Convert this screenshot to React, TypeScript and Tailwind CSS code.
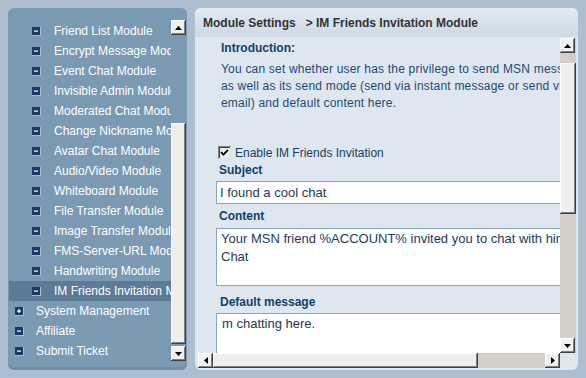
import React from "react"

const subModules = [
  "Friend List Module",
  "Encrypt Message Module",
  "Event Chat Module",
  "Invisible Admin Module",
  "Moderated Chat Module",
  "Change Nickname Module",
  "Avatar Chat Module",
  "Audio/Video Module",
  "Whiteboard Module",
  "File Transfer Module",
  "Image Transfer Module",
  "FMS-Server-URL Module",
  "Handwriting Module",
  "IM Friends Invitation Module",
]

const topLevel = [
  { name: "System Management", plus: true },
  { name: "Affiliate", plus: false },
  { name: "Submit Ticket", plus: false },
]

const bevel =
  "shadow-[inset_-1px_-1px_0_#404040,inset_1px_1px_0_#ffffff,inset_-2px_-2px_0_#808080]"

function TreeIcon({ plus }: { plus?: boolean }) {
  return (
    <svg width="9" height="9" viewBox="0 0 9 9" className="shrink-0">
      <rect x="0" y="0" width="9" height="9" fill="#a9bdd0" />
      <rect x="0" y="0" width="8" height="8" fill="#1a3a63" />
      <rect x="2" y="3.5" width="4" height="1.2" fill="#ffffff" />
      {plus && <rect x="3.4" y="2" width="1.2" height="4" fill="#ffffff" />}
    </svg>
  )
}

function Arrow({ dir }: { dir: "up" | "down" | "left" | "right" }) {
  const pts = {
    up: "0,4 7,4 3.5,0",
    down: "0,0 7,0 3.5,4",
    left: "4,0 4,7 0,3.5",
    right: "0,0 0,7 4,3.5",
  }[dir]
  const vertical = dir === "up" || dir === "down"
  return (
    <div
      className={`w-[15px] h-[15px] shrink-0 bg-[#f0f0f0] flex items-center justify-center ${bevel}`}
    >
      <svg
        width={vertical ? 7 : 4}
        height={vertical ? 4 : 7}
        viewBox={vertical ? "0 0 7 4" : "0 0 4 7"}
      >
        <polygon points={pts} fill="#000000" />
      </svg>
    </div>
  )
}

function Checkbox() {
  return (
    <span className="w-[13px] h-[13px] shrink-0 bg-[#ececec] border border-t-[#808080] border-l-[#808080] border-b-[#e0e0e0] border-r-[#e0e0e0] shadow-[inset_1px_1px_0_#404040] flex items-center justify-center">
      <svg width="9" height="9" viewBox="0 0 9 9">
        <path d="M1 4.2 L3.4 6.6 L8 1.8" stroke="#000" strokeWidth="1.8" fill="none" />
      </svg>
    </span>
  )
}

export default function App() {
  return (
    <div className="w-[586px] h-[378px] bg-[#adbed1] flex gap-2 py-2 pl-2 pr-2 font-['Liberation_Sans',Arial,sans-serif] text-[12px] overflow-hidden">
      {/* left tree */}
      <div className="w-[179px] shrink-0 rounded-[6px] bg-[#7a9ab4] shadow-[inset_0_-3px_0_#7090aa] flex pt-3 pr-px overflow-hidden">
        <div className="w-[162px] ml-px mt-px flex flex-col text-white leading-5">
          {subModules.map((m, i) => (
            <div
              key={m}
              className={`h-5 flex items-center gap-[13px] pl-[23px] whitespace-nowrap overflow-hidden ${
                i === subModules.length - 1 ? "bg-[#5c7b97]" : ""
              }`}
            >
              <TreeIcon />
              <span>{m}</span>
            </div>
          ))}
          {topLevel.map(t => (
            <div
              key={t.name}
              className="h-5 flex items-center gap-[12px] pl-[6px] whitespace-nowrap overflow-hidden"
            >
              <TreeIcon plus={t.plus} />
              <span>{t.name}</span>
            </div>
          ))}
        </div>
        <div className="w-[15px] h-[341px] flex flex-col">
          <Arrow dir="up" />
          <div className="h-[88px]" />
          <div className={`h-[221px] bg-[#eeeeee] ${bevel}`} />
          <div className="flex-1" />
          <Arrow dir="down" />
        </div>
      </div>

      {/* right settings panel */}
      <div className="flex-1 rounded-[6px] bg-[#dee6ef] flex flex-col overflow-hidden">
        <div className="h-[29px] shrink-0 bg-gradient-to-b from-[#e3eaf1] to-[#cdd9e5] flex items-center pl-2 font-bold text-[#333333] whitespace-nowrap">
          <span>Module Settings</span>
          <span className="ml-[10px]">&gt; IM Friends Invitation Module</span>
        </div>
        <div className="flex-1 flex flex-col pt-px pl-[3px] pr-[2px] pb-[2px] min-h-0">
          <div className="flex-1 flex min-h-0">
            <div className="flex-1 overflow-hidden border-l border-dotted border-[#f2f5f9] -ml-px pl-[18px] whitespace-nowrap">
              <div className="pl-[5px] mt-[2px] leading-[17px] font-bold text-[#123f6a]">
                Introduction:
              </div>
              <div className="pl-[5px] mt-[4px] leading-[17px] tracking-[0.2px] text-[#1c4a78]">
                <div>You can set whether user has the privilege to send MSN messages</div>
                <div>as well as its send mode (send via instant message or send via</div>
                <div>email) and default content here.</div>
              </div>
              <label className="mt-[32px] h-[17px] flex items-center gap-[4px] pl-[2px] text-[#173e63]">
                <Checkbox />
                <span>Enable IM Friends Invitation</span>
              </label>
              <div className="pl-[3px] mt-px leading-[17px] font-bold text-[#123f6a]">Subject</div>
              <div className="mt-[2px] w-[420px] h-[23px] bg-white border border-[#8da5ba] pl-[3px] flex items-center text-[13px] text-[#1e3a5a]">
                I found a cool chat
              </div>
              <div className="pl-[3px] mt-[4px] leading-[17px] font-bold text-[#123f6a]">Content</div>
              <div className="mt-[3px] w-[420px] h-[58px] bg-white border border-[#8da5ba] pl-[4px] pt-[1px] text-[13px] leading-[18px] text-[#1e3a5a]">
                <div>Your MSN friend %ACCOUNT% invited you to chat with him at</div>
                <div>Chat</div>
              </div>
              <div className="pl-[4px] mt-[8px] leading-[17px] font-bold text-[#123f6a]">
                Default message
              </div>
              <div className="mt-[2px] w-[420px] h-[60px] bg-white border border-[#8da5ba] pl-[5px] pt-[1px] text-[13px] leading-[18px] text-[#1e3a5a]">
                m chatting here.
              </div>
            </div>
            <div className="w-[16px] shrink-0 flex flex-col bg-[#d4d0c8]">
              <Arrow dir="up" />
              <div className="h-[10px]" />
              <div className={`h-[151px] bg-[#eeeeee] ${bevel}`} />
              <div className="flex-1" />
              <Arrow dir="down" />
            </div>
          </div>
          <div className="h-[15px] shrink-0 flex">
            <div className="flex-1 flex bg-[#d4d0c8]">
              <Arrow dir="left" />
              <div className={`w-[265px] bg-[#eeeeee] ${bevel}`} />
              <div className="flex-1" />
              <Arrow dir="right" />
            </div>
            <div className="w-[16px] shrink-0 bg-[#dee6ef]" />
          </div>
        </div>
      </div>
    </div>
  )
}
